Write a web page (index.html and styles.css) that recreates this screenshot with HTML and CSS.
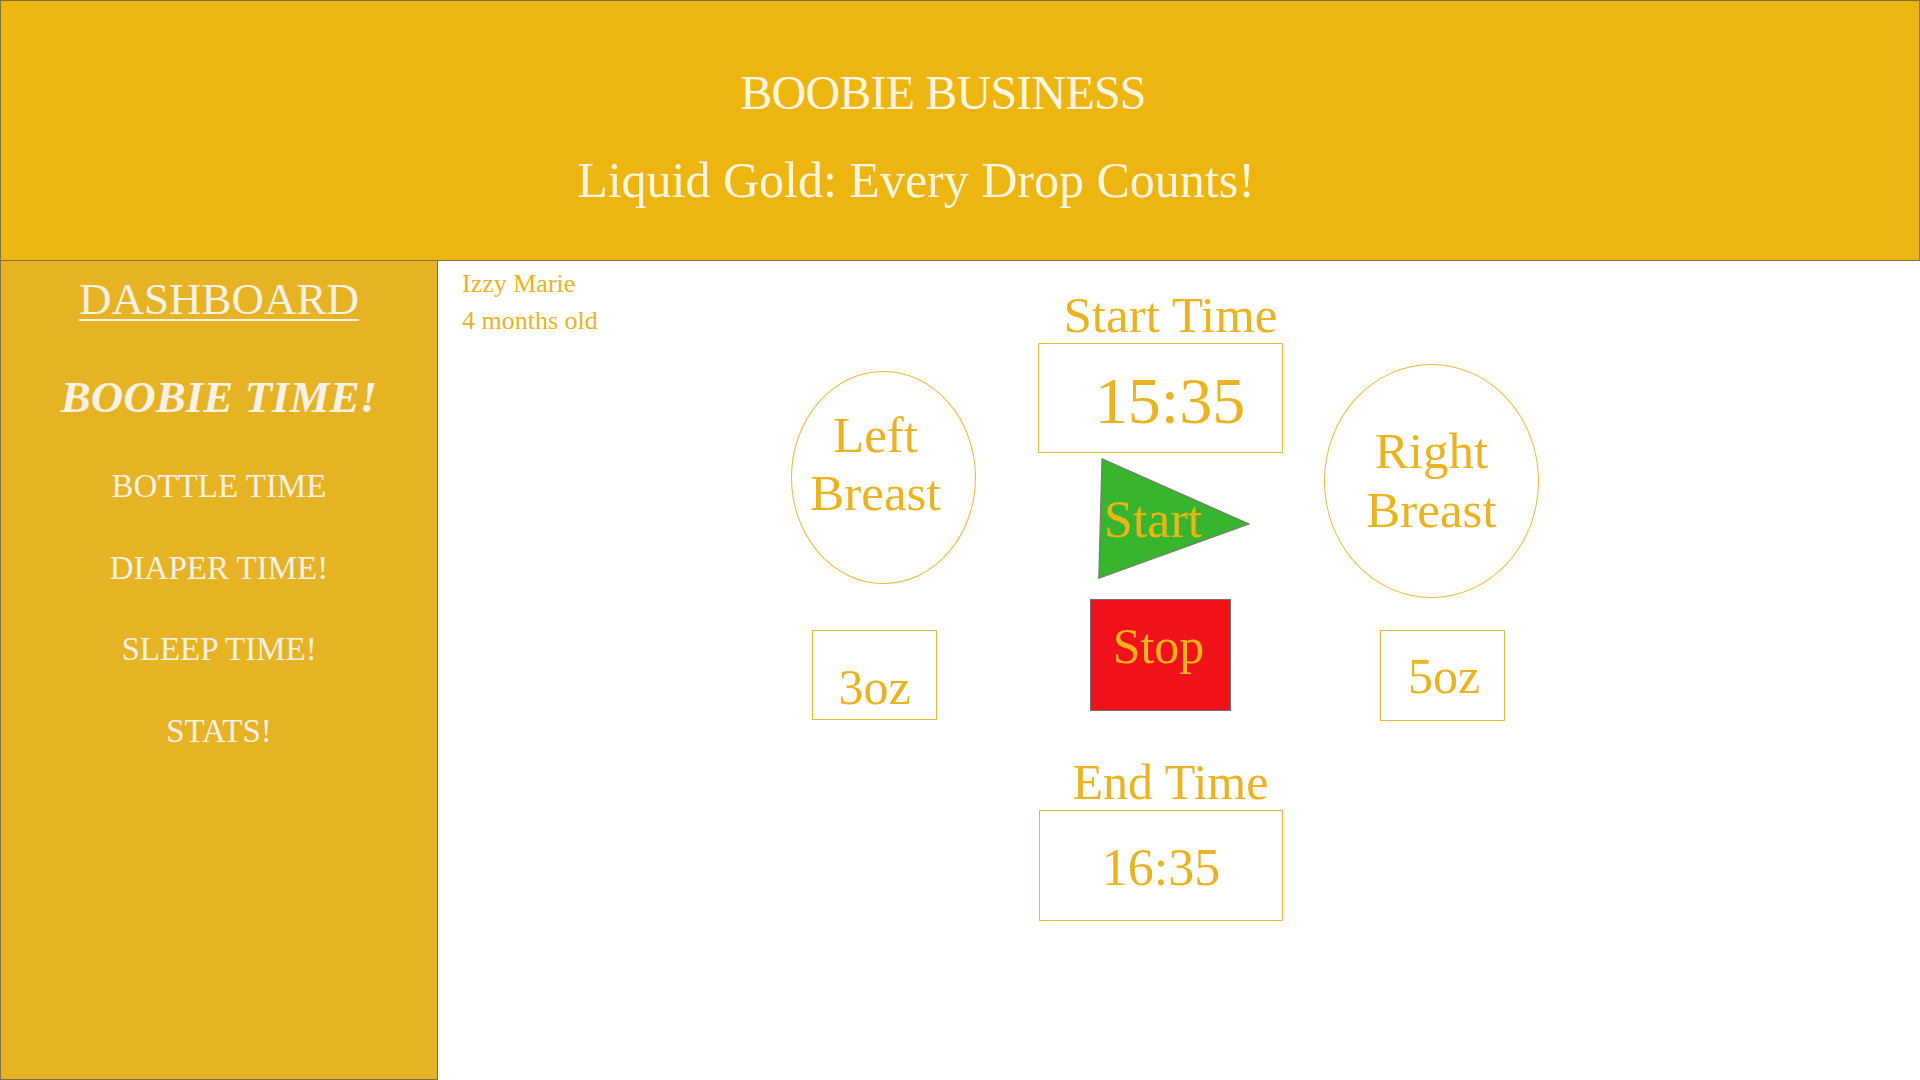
FILE: index.html
```html
<!DOCTYPE html>
<html lang="en">
<head>
<meta charset="utf-8">
<title>Boobie Business</title>
<link rel="stylesheet" href="styles.css">
</head>
<body>
<header class="top">
  <h1 class="title">BOOBIE BUSINESS</h1>
  <p class="subtitle">Liquid Gold: Every Drop Counts!</p>
</header>
<div class="layout">
  <nav class="sidebar">
    <a class="nav-dash">DASHBOARD</a>
    <a class="nav-active">BOOBIE TIME!</a>
    <a class="nav-item">BOTTLE TIME</a>
    <a class="nav-item">DIAPER TIME!</a>
    <a class="nav-item">SLEEP TIME!</a>
    <a class="nav-item">STATS!</a>
  </nav>
  <main class="main">
    <div class="baby">
      <div class="baby-line">Izzy Marie</div>
      <div class="baby-line">4 months old</div>
    </div>
    <div class="tracker">
      <div class="col col-left">
        <div class="breast breast-left"><span>Left<br>Breast</span></div>
        <div class="oz oz-left">3oz</div>
      </div>
      <div class="col col-center">
        <div class="time-label start-label">Start Time</div>
        <div class="time-box start-box">15:35</div>
        <div class="start-btn">
          <svg class="tri" viewBox="0 0 152 121" width="152" height="121" aria-hidden="true">
            <polygon points="4,0.8 0.8,120.2 151,66" fill="#37b52f" stroke="#7a7a6a" stroke-width="1.2"/>
          </svg>
          <span class="start-text">Start</span>
        </div>
        <div class="stop-btn">Stop</div>
        <div class="time-label end-label">End Time</div>
        <div class="time-box end-box">16:35</div>
      </div>
      <div class="col col-right">
        <div class="breast breast-right"><span>Right<br>Breast</span></div>
        <div class="oz oz-right">5oz</div>
      </div>
    </div>
  </main>
</div>
</body>
</html>
```
FILE: styles.css
```css
* { box-sizing: border-box; }
html, body { margin: 0; padding: 0; }
body {
  width: 1920px;
  height: 1080px;
  overflow: hidden;
  background: #ffffff;
  font-family: "Liberation Serif", "Times New Roman", serif;
}

.top {
  height: 261px;
  background: #edb510;
  border: 1px solid #7f7142;
  display: flex;
  flex-direction: column;
  align-items: center;
  padding-top: 62px;
  color: #fff6e2;
}
.title {
  margin: 0 34px 0 0;
  font-weight: normal;
  font-size: 48px;
  letter-spacing: -0.8px;
  line-height: 60px;
}
.subtitle {
  margin: 27px 88px 0 0;
  font-size: 50px;
  line-height: 60px;
}

.layout {
  display: flex;
  height: 819px;
}
.sidebar {
  width: 438px;
  flex: 0 0 438px;
  background: #e5b324;
  border-left: 1px solid #7f7142;
  border-right: 1px solid #7f7142;
  border-bottom: 1px solid #7f7142;
  display: flex;
  flex-direction: column;
  align-items: center;
  padding-top: 10px;
  gap: 41.5px;
  color: #f8f1e6;
}
.nav-dash {
  font-size: 45px;
  line-height: 56px;
  text-decoration: underline;
  text-decoration-thickness: 2px;
  text-underline-offset: 5px;
}
.nav-active {
  font-size: 45px;
  line-height: 56px;
  font-weight: bold;
  font-style: italic;
}
.nav-item {
  font-size: 33px;
  line-height: 40px;
}

.main {
  flex: 1;
  display: flex;
  align-items: flex-start;
  padding: 4px 0 0 24px;
  color: #e9b322;
}
.baby {
  flex: 0 0 329px;
  font-size: 26px;
  line-height: 37px;
}

.tracker {
  display: flex;
  align-items: flex-start;
}
.col {
  display: flex;
  flex-direction: column;
  align-items: flex-start;
}
.col-left { width: 185px; margin-right: 62px; }
.col-center { width: 245px; margin-right: 41px; }
.col-right { width: 215px; }

.breast {
  border: 1.5px solid #e6b83c;
  border-radius: 50%;
  display: flex;
  align-items: center;
  justify-content: center;
  text-align: center;
  font-size: 51px;
}
.breast-left {
  width: 185px;
  height: 213px;
  margin-top: 106px;
  line-height: 58px;
  padding: 0 16px 27px 0;
}
.breast-right {
  width: 215px;
  height: 234px;
  margin-top: 99px;
  line-height: 59px;
}

.oz {
  width: 125px;
  border: 1.5px solid #e6b83c;
  text-align: center;
  font-size: 50px;
  line-height: 50px;
}
.oz-left {
  height: 90px;
  margin: 46px 0 0 21px;
  padding-top: 31px;
}
.oz-right {
  height: 91px;
  margin: 32px 0 0 56px;
  padding: 20px 0 0 3px;
}

.time-label {
  width: 245px;
  text-align: center;
  line-height: 56px;
  padding-left: 20px;
}
.start-label {
  font-size: 51px;
  margin-top: 22px;
}
.end-label {
  font-size: 50px;
  margin-top: 43px;
}
.time-box {
  width: 245px;
  border: 1.5px solid #e6b83c;
  text-align: center;
}
.start-box {
  height: 110px;
  font-size: 66px;
  line-height: 80px;
  padding: 17px 0 0 19px;
}
.end-box {
  height: 111px;
  font-size: 52px;
  line-height: 60px;
  padding-top: 27px;
  margin-left: 1px;
  width: 244px;
}

.start-btn {
  position: relative;
  width: 152px;
  height: 121px;
  margin: 5px 0 0 60px;
  padding: 36px 0 0 6px;
  font-size: 52px;
  line-height: 52px;
  color: #edb514;
}
.tri {
  position: absolute;
  left: 0;
  top: 0;
}
.start-text {
  position: relative;
}

.stop-btn {
  width: 141px;
  height: 112px;
  margin: 20px 0 0 52px;
  background: #f0121b;
  border: 1.5px solid #7d6a72;
  text-align: center;
  font-size: 50px;
  line-height: 50px;
  padding: 21px 4px 0 0;
  color: #f2b418;
}
```
